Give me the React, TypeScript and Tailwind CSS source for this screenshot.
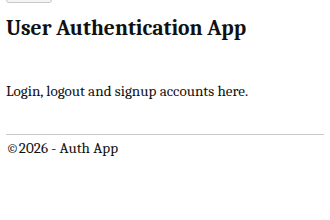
export default function App() {
  return (
    <div className="px-[6px] font-serif text-[#111]">
      <div className="-mt-[16px] h-[19px] w-[46px] rounded-[3px] border border-[#c8c8c8] bg-[#f4f4f4]" />
      <h1 className="mt-[11px] text-[21.6px] font-bold leading-[28px]">User Authentication App</h1>
      <p className="mt-[38px] text-[15.1px] leading-[22px]">Login, logout and signup accounts here.</p>
      <hr className="mt-[32px] border-[#c8c8c8]" />
      <p className="mt-[2px] text-[15.1px] leading-[22px]">©2026 - Auth App</p>
    </div>
  );
}
